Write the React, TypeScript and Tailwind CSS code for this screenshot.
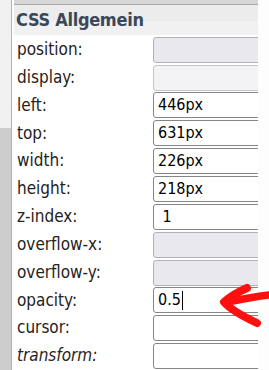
const rows: { label: string; value?: string; state: 'off' | 'offLight' | 'on'; italic?: boolean; caret?: boolean }[] = [
  { label: 'position:', state: 'off' },
  { label: 'display:', state: 'offLight' },
  { label: 'left:', value: '446px', state: 'on' },
  { label: 'top:', value: '631px', state: 'on' },
  { label: 'width:', value: '226px', state: 'on' },
  { label: 'height:', value: '218px', state: 'on' },
  { label: 'z-index:', value: '\u00a01', state: 'on' },
  { label: 'overflow-x:', state: 'off' },
  { label: 'overflow-y:', state: 'off' },
  { label: 'opacity:', value: '0.5', state: 'on', caret: true },
  { label: 'cursor:', state: 'on' },
  { label: 'transform:', state: 'on', italic: true },
];

export default function App() {
  return (
    <div className="relative flex w-[269px] h-[370px] overflow-hidden bg-[#fdfdfd] font-['DejaVu_Sans_Condensed','DejaVu_Sans',sans-serif]">
      {/* left scroll strip */}
      <div className="w-[12px] flex flex-col border-r border-[#b4b4b4]">
        <div className="h-[128px] bg-[#f0f0f0]" />
        <div className="flex-1 bg-[#cdcdcd]" />
      </div>

      <div className="ml-[2px] w-[244px] overflow-hidden flex flex-col bg-white">
        <div className="h-[4px] bg-[#d6d6d6] border-b border-[#a8a8a8] box-content" />
        <div className="h-[30px] flex flex-col relative">
          <div className="h-[16px] bg-[#ececec]" />
          <div className="flex-1 bg-[#f1f1f1]" />
          <div className="absolute inset-0 flex items-center pl-[2px] text-[18px] font-bold text-[#3b4858] tracking-[-0.3px]">
            CSS Allgemein
          </div>
        </div>
        <div className="h-[1px]" />
        {rows.map(r => (
          <div key={r.label} className="h-[28px] flex items-center">
            <div className={`w-[139px] shrink-0 pl-[3px] text-[17px] text-[#262220] ${r.italic ? 'italic' : ''}`}>
              {r.label}
            </div>
            <div
              className={
                r.state === 'on'
                  ? 'w-[140px] h-[26px] shrink-0 rounded-[3px] border border-[#858585] bg-white flex items-center pl-[4px] text-[16px] text-black'
                  : r.state === 'off'
                  ? 'w-[140px] h-[26px] shrink-0 rounded-[3px] border border-[#b1b1ba] bg-[#e9e9ed]'
                  : 'w-[140px] h-[26px] shrink-0 rounded-[3px] border border-[#c4c4cb] bg-[#f3f3f5]'
              }
            >
              {r.value && <span className="whitespace-pre">{r.value}</span>}
              {r.caret && <span className="w-[1px] h-[19px] bg-black ml-[1px]" />}
            </div>
          </div>
        ))}
      </div>

      {/* red annotation arrow */}
      <svg className="absolute left-[214px] top-[280px]" width="55" height="48" viewBox="0 0 55 48" fill="none">
        <path d="M33 8 C26 11 16 17 10 22 C16 29 28 36 43 43" stroke="#ff0f0f" strokeWidth="8" strokeLinecap="round" strokeLinejoin="round" />
        <path d="M14 22 C24 20 38 17 55 15" stroke="#ff0f0f" strokeWidth="7.5" strokeLinecap="round" />
      </svg>
    </div>
  );
}
